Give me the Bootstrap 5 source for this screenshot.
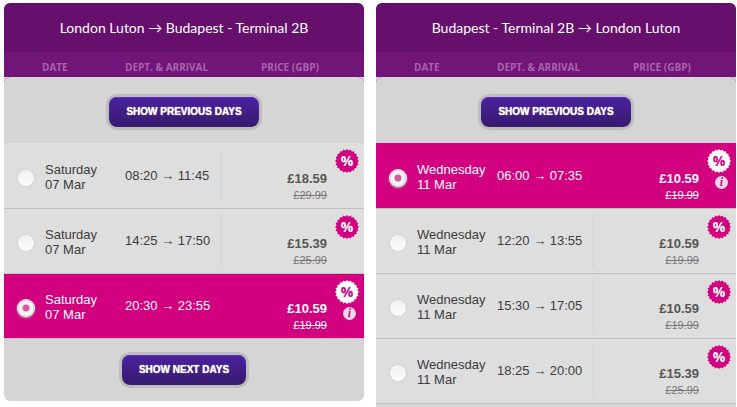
<!DOCTYPE html>
<html lang="en">
<head>
<meta charset="utf-8">
<meta name="viewport" content="width=device-width, initial-scale=1">
<title>Select flights</title>
<link rel="stylesheet" href="https://cdn.jsdelivr.net/npm/bootstrap@5.3.0/dist/css/bootstrap.min.css">
<style>
  body { font: 13px/15px "Liberation Sans", Arial, sans-serif; color: #3c3c3c; background: #fff; }
  .trip-page { gap: 12px; padding: 3px 1px 0 4px; }
  .trip { flex: 1 1 0; min-width: 0; background: #d5d5d5; border-radius: 6px 6px 0 0; overflow: hidden; }
  .trip-short { border-radius: 6px; }
  .trip-title { font: 14px/20px Lato, "Open Sans", sans-serif; color: #fff; background: #660f6c; padding: 15px 8px 14px; }
  .trip-table { table-layout: fixed; border-collapse: separate; border-spacing: 0; }
  .trip-table th { font: bold 10px/15px "Open Sans", "Noto Sans", sans-serif; color: #a964ab; background: #721578; padding: 8px 0 2px; }
  .trip-table .th-date { padding-left: 38px; }
  .trip-table .th-price { padding-left: 40px; }
  .col-pick { width: 41px; } .col-day { width: 80px; } .col-time { width: 96px; } .col-tag { width: 29px; }
  .more-row { background: #721578; }
  .more-row td { background: #d5d5d5; padding: 20px 0 16px; border-radius: 6px 6px 0 0; }
  .next-row td { padding: 16px 0; }
  .btn-more { font: bold 10px/14px "Liberation Sans", Arial, sans-serif; color: #fff; text-shadow: 0 0 1px #fff; border: 0; border-radius: 8px; padding: 8px 17px;
    background: linear-gradient(#4b229f, #371a6e); box-shadow: inset 0 1px 0 #5a2cc0, 0 0 0 3px #bebebe; vertical-align: top; }
  .btn-more:hover { color: #fff; background: #4b229f; }
  .flight td { background: #dedede; height: 65px; vertical-align: top; border-bottom: 1px solid #c1c1c1; padding: 0; }
  .flight.first td { height: 66px; border-top: 1px solid #dedede; }
  .flight .day { padding-top: 18px; }
  .flight .time { padding-top: 24px; white-space: nowrap; }
  .flight .pick { padding: 26px 0 0 14px; }
  .fare { height: 54px; margin-top: 5px; border-left: 1px solid #d2d2d2; padding: 22px 8px 0 0; color: #555; }
  .fare s { font-size: 11px; line-height: 12px; color: #777; margin-top: 3px; }
  .pick input { appearance: none; display: block; width: 16px; height: 16px; margin: 0; border-radius: 50%;
    background: linear-gradient(#f0f0f0, #fcfcfc); box-shadow: 0 0 2px #bbb; }
  .pick input:checked { background: radial-gradient(circle, #d55a9f 0 3px, #f2f2f2 4px); box-shadow: 0 0 0 1px #eee, 0 1px 2px 1px #bbb; }
  .flight.chosen td { background: #d2007f; color: #fff; }
  .flight.first.chosen td { border-top-color: #d2007f; }
  .chosen .fare { border-color: #d2007f; color: #fff; }
  .chosen .fare s { color: #fff; }
  .tag { display: block; width: 24px; height: 24px; margin-top: 6px; fill: #d2007f; color: #fff; }
  .first .tag { margin-top: 5px; }
  .chosen .tag { fill: #fff; color: #d2007f; }
  .tag text { font: bold 14px "Open Sans", "Noto Sans", sans-serif; fill: currentColor; }
  .info { width: 13px; height: 13px; margin: 3px 0 0 8px; border-radius: 50%; background: #f9d5ea; color: #b8187b;
    font: italic bold 12px/13px "Liberation Serif", serif; text-align: center; }
</style>
<script src="https://cdn.jsdelivr.net/npm/bootstrap@5.3.0/dist/js/bootstrap.bundle.min.js"></script>
</head>
<body>
<svg class="d-none" aria-hidden="true">
  <symbol id="discount" viewBox="0 0 24 24">
    <path d="M12 0L24 12L12 24L0 12Z"/>
    <path d="M12 0L24 12L12 24L0 12Z" transform="rotate(18 12 12)"/>
    <path d="M12 0L24 12L12 24L0 12Z" transform="rotate(36 12 12)"/>
    <path d="M12 0L24 12L12 24L0 12Z" transform="rotate(54 12 12)"/>
    <path d="M12 0L24 12L12 24L0 12Z" transform="rotate(72 12 12)"/>
  </symbol>
</svg>
<main class="trip-page d-flex vh-100 overflow-hidden">
  <section class="trip trip-short align-self-start">
    <h2 class="trip-title text-center m-0">London Luton → Budapest - Terminal 2B</h2>
    <table class="trip-table w-100">
      <colgroup><col class="col-pick"><col class="col-day"><col class="col-time"><col><col class="col-tag"></colgroup>
      <thead><tr><th class="th-date" colspan="2">DATE</th><th>DEPT. &amp; ARRIVAL</th><th class="th-price" colspan="2">PRICE (GBP)</th></tr></thead>
      <tbody>
        <tr class="more-row"><td colspan="5" class="text-center"><button type="button" class="btn btn-more">SHOW PREVIOUS DAYS</button></td></tr>
        <tr class="flight first">
          <td class="pick"><input type="radio" name="out" id="o1"></td>
          <td class="day"><label for="o1">Saturday<br>07 Mar</label></td>
          <td class="time">08:20 → 11:45</td>
          <td><div class="fare text-end"><b class="d-block">£18.59</b><s class="d-block">£29.99</s></div></td>
          <td><svg class="tag"><use href="#discount"/><text x="12" y="17" text-anchor="middle">%</text></svg></td>
        </tr>
        <tr class="flight">
          <td class="pick"><input type="radio" name="out" id="o2"></td>
          <td class="day"><label for="o2">Saturday<br>07 Mar</label></td>
          <td class="time">14:25 → 17:50</td>
          <td><div class="fare text-end"><b class="d-block">£15.39</b><s class="d-block">£25.99</s></div></td>
          <td><svg class="tag"><use href="#discount"/><text x="12" y="17" text-anchor="middle">%</text></svg></td>
        </tr>
        <tr class="flight chosen">
          <td class="pick"><input type="radio" name="out" id="o3" checked></td>
          <td class="day"><label for="o3">Saturday<br>07 Mar</label></td>
          <td class="time">20:30 → 23:55</td>
          <td><div class="fare text-end"><b class="d-block">£10.59</b><s class="d-block">£19.99</s></div></td>
          <td><svg class="tag"><use href="#discount"/><text x="12" y="17" text-anchor="middle">%</text></svg><div class="info">i</div></td>
        </tr>
        <tr class="next-row"><td colspan="5" class="text-center"><button type="button" class="btn btn-more">SHOW NEXT DAYS</button></td></tr>
      </tbody>
    </table>
  </section>
  <section class="trip">
    <h2 class="trip-title text-center m-0">Budapest - Terminal 2B → London Luton</h2>
    <table class="trip-table w-100">
      <colgroup><col class="col-pick"><col class="col-day"><col class="col-time"><col><col class="col-tag"></colgroup>
      <thead><tr><th class="th-date" colspan="2">DATE</th><th>DEPT. &amp; ARRIVAL</th><th class="th-price" colspan="2">PRICE (GBP)</th></tr></thead>
      <tbody>
        <tr class="more-row"><td colspan="5" class="text-center"><button type="button" class="btn btn-more">SHOW PREVIOUS DAYS</button></td></tr>
        <tr class="flight first chosen">
          <td class="pick"><input type="radio" name="back" id="b1" checked></td>
          <td class="day"><label for="b1">Wednesday<br>11 Mar</label></td>
          <td class="time">06:00 → 07:35</td>
          <td><div class="fare text-end"><b class="d-block">£10.59</b><s class="d-block">£19.99</s></div></td>
          <td><svg class="tag"><use href="#discount"/><text x="12" y="17" text-anchor="middle">%</text></svg><div class="info">i</div></td>
        </tr>
        <tr class="flight">
          <td class="pick"><input type="radio" name="back" id="b2"></td>
          <td class="day"><label for="b2">Wednesday<br>11 Mar</label></td>
          <td class="time">12:20 → 13:55</td>
          <td><div class="fare text-end"><b class="d-block">£10.59</b><s class="d-block">£19.99</s></div></td>
          <td><svg class="tag"><use href="#discount"/><text x="12" y="17" text-anchor="middle">%</text></svg></td>
        </tr>
        <tr class="flight">
          <td class="pick"><input type="radio" name="back" id="b3"></td>
          <td class="day"><label for="b3">Wednesday<br>11 Mar</label></td>
          <td class="time">15:30 → 17:05</td>
          <td><div class="fare text-end"><b class="d-block">£10.59</b><s class="d-block">£19.99</s></div></td>
          <td><svg class="tag"><use href="#discount"/><text x="12" y="17" text-anchor="middle">%</text></svg></td>
        </tr>
        <tr class="flight">
          <td class="pick"><input type="radio" name="back" id="b4"></td>
          <td class="day"><label for="b4">Wednesday<br>11 Mar</label></td>
          <td class="time">18:25 → 20:00</td>
          <td><div class="fare text-end"><b class="d-block">£15.39</b><s class="d-block">£25.99</s></div></td>
          <td><svg class="tag"><use href="#discount"/><text x="12" y="17" text-anchor="middle">%</text></svg></td>
        </tr>
      </tbody>
    </table>
  </section>
</main>
</body>
</html>
